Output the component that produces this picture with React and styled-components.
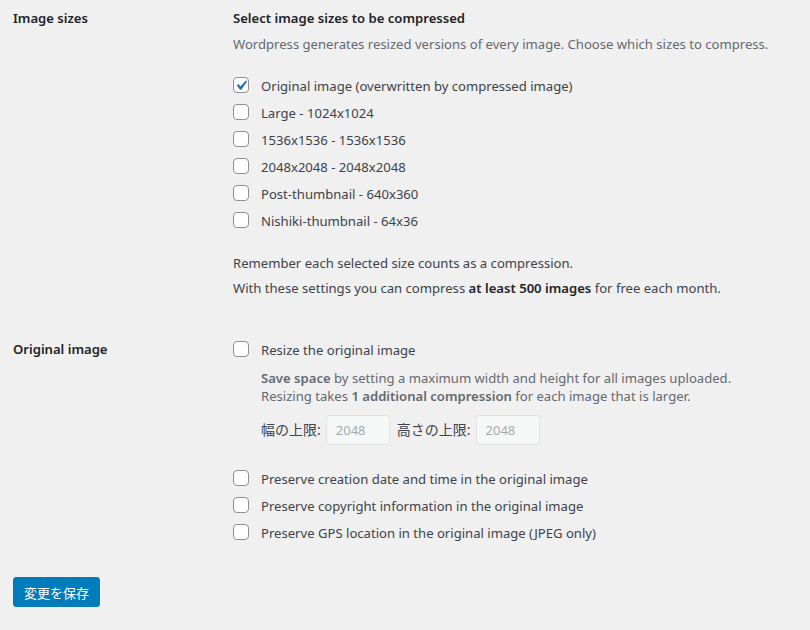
import React from "react";
import styled, { createGlobalStyle } from "styled-components";

const GlobalStyle = createGlobalStyle`
  html, body {
    margin: 0;
    padding: 0;
    background: #f0f0f1;
  }
  body {
    font-family: "Noto Sans", "Noto Sans CJK JP", sans-serif;
    font-size: 13.1px;
    line-height: 18px;
    color: #3c434a;
  }
`;

const Page = styled.div`
  padding: 9px 13px 0;
  width: 810px;
  box-sizing: border-box;
`;

const Row = styled.div`
  display: grid;
  grid-template-columns: 220px 1fr;
  margin-bottom: ${(p) => p.$gap || 0}px;
`;

const RowLabel = styled.div`
  font-weight: 600;
  color: #1d2327;
  padding-top: ${(p) => p.$top || 0}px;
`;

const Cell = styled.div`
  display: flex;
  flex-direction: column;
`;

const Heading = styled.div`
  font-weight: 600;
  color: #1d2327;
  margin-bottom: 8px;
`;

const Description = styled.div`
  color: #646970;
  margin-bottom: 19px;
`;

const CheckList = styled.div`
  display: flex;
  flex-direction: column;
  margin-bottom: ${(p) => p.$gap || 0}px;
`;

const CheckRow = styled.label`
  display: flex;
  align-items: center;
  height: 27px;
  gap: 12px;
`;

const Box = styled.span`
  width: 16px;
  height: 16px;
  box-sizing: border-box;
  border: 1px solid #8c8f94;
  border-radius: 4px;
  background: #fff;
  display: flex;
  align-items: center;
  justify-content: center;
  flex-shrink: 0;
  margin-top: -1px;

  svg {
    margin: -3px;
  }
`;

const Note = styled.p`
  margin: 0 0 ${(p) => p.$gap || 0}px;
  color: #3c434a;
  b {
    font-weight: 600;
    color: #1d2327;
  }
`;

const Indented = styled.div`
  padding-left: 28px;
`;

const SubNote = styled.div`
  color: #646970;
  margin-top: 6px;
  b {
    font-weight: 600;
  }
`;

const LimitRow = styled.div`
  display: flex;
  align-items: center;
  gap: 5px;
  margin: 10px 0 20px;
  font-size: 14px;
  color: #3c434a;
`;

const LimitInput = styled.input`
  width: 64px;
  height: 30px;
  box-sizing: border-box;
  padding: 0 9px;
  border: 1px solid rgba(220, 220, 222, 0.75);
  border-radius: 4px;
  background: #f6f7f7;
  color: #a7aaad;
  font-family: "Noto Sans", sans-serif;
  font-size: 13px;
  margin-right: 2px;
`;

const SaveButton = styled.button`
  margin-top: 31px;
  height: 30px;
  width: 87px;
  padding: 0;
  border: 1px solid #007cba;
  border-radius: 3px;
  background: #007cba;
  color: #fff;
  font-family: "Noto Sans CJK JP", sans-serif;
  font-size: 13px;
  cursor: pointer;
`;

const Check = ({ checked, children }) => (
  <CheckRow>
    <Box>
      {checked && (
        <svg width="21" height="21" viewBox="0 0 20 20">
          <path d="M14.83 4.89l1.34.94-5.81 8.38H9.02L5.78 9.67l1.34-1.25 2.57 2.4z" fill="#2271b1" />
        </svg>
      )}
    </Box>
    <span>{children}</span>
  </CheckRow>
);

const sizes = [
  { label: "Original image (overwritten by compressed image)", checked: true },
  { label: "Large - 1024x1024" },
  { label: "1536x1536 - 1536x1536" },
  { label: "2048x2048 - 2048x2048" },
  { label: "Post-thumbnail - 640x360" },
  { label: "Nishiki-thumbnail - 64x36" },
];

const preserve = [
  "Preserve creation date and time in the original image",
  "Preserve copyright information in the original image",
  "Preserve GPS location in the original image (JPEG only)",
];

export default function App() {
  return (
    <Page>
      <GlobalStyle />
      <Row $gap={39}>
        <RowLabel>Image sizes</RowLabel>
        <Cell>
          <Heading>Select image sizes to be compressed</Heading>
          <Description>
            Wordpress generates resized versions of every image. Choose which sizes to compress.
          </Description>
          <CheckList $gap={20}>
            {sizes.map((s) => (
              <Check key={s.label} checked={s.checked}>
                {s.label}
              </Check>
            ))}
          </CheckList>
          <Note $gap={7}>Remember each selected size counts as a compression.</Note>
          <Note>
            With these settings you can compress <b>at least 500 images</b> for free each month.
          </Note>
        </Cell>
      </Row>
      <Row>
        <RowLabel $top={4}>Original image</RowLabel>
        <Cell>
          <Check>Resize the original image</Check>
          <Indented>
            <SubNote>
              <b>Save space</b> by setting a maximum width and height for all images uploaded.
              <br />
              Resizing takes <b>1 additional compression</b> for each image that is larger.
            </SubNote>
            <LimitRow>
              <span>幅の上限:</span>
              <LimitInput defaultValue="2048" disabled />
              <span>高さの上限:</span>
              <LimitInput defaultValue="2048" disabled />
            </LimitRow>
          </Indented>
          <CheckList>
            {preserve.map((p) => (
              <Check key={p}>{p}</Check>
            ))}
          </CheckList>
        </Cell>
      </Row>
      <SaveButton>変更を保存</SaveButton>
    </Page>
  );
}
